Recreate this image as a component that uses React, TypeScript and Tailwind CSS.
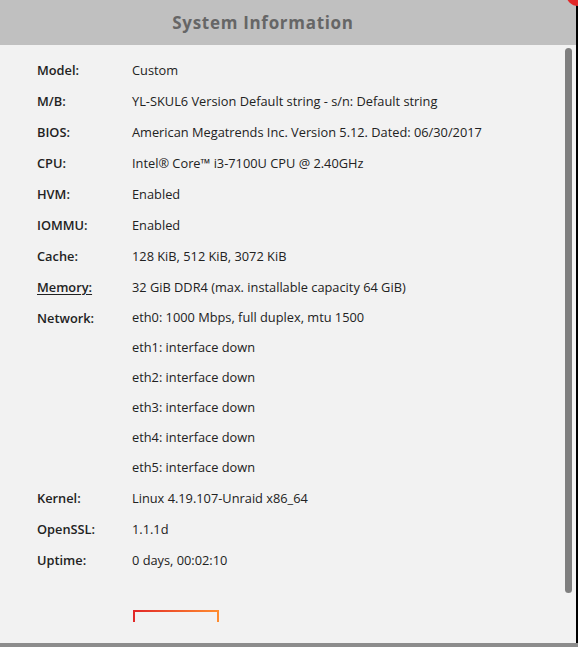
const rows: { label: string; lines: string[]; link?: boolean }[] = [
  { label: "Model:", lines: ["Custom"] },
  { label: "M/B:", lines: ["YL-SKUL6 Version Default string - s/n: Default string"] },
  { label: "BIOS:", lines: ["American Megatrends Inc. Version 5.12. Dated: 06/30/2017"] },
  { label: "CPU:", lines: ["Intel® Core™ i3-7100U CPU @ 2.40GHz"] },
  { label: "HVM:", lines: ["Enabled"] },
  { label: "IOMMU:", lines: ["Enabled"] },
  { label: "Cache:", lines: ["128 KiB, 512 KiB, 3072 KiB"] },
  { label: "Memory:", lines: ["32 GiB DDR4 (max. installable capacity 64 GiB)"], link: true },
  {
    label: "Network:",
    lines: [
      "eth0: 1000 Mbps, full duplex, mtu 1500",
      "eth1: interface down",
      "eth2: interface down",
      "eth3: interface down",
      "eth4: interface down",
      "eth5: interface down",
    ],
  },
  { label: "Kernel:", lines: ["Linux 4.19.107-Unraid x86_64"] },
  { label: "OpenSSL:", lines: ["1.1.1d"] },
  { label: "Uptime:", lines: ["0 days, 00:02:10"] },
];

export default function App() {
  return (
    <div
      className="h-[647px] w-[578px] bg-[#8c8c8c] overflow-hidden"
      style={{ fontFamily: '"Open Sans", "DejaVu Sans", sans-serif' }}
    >
      <div className="relative flex h-[643px] w-[578px] flex-col border-r-2 border-black bg-[#f2f2f2]">
        {/* title bar */}
        <div className="flex h-[45px] shrink-0 items-center justify-center bg-[#c0c0c0] pr-[50px]">
          <h1 className="text-[17px] font-bold tracking-[0.7px] text-[#666]">System Information</h1>
        </div>
        <span className="absolute right-[-14px] top-[-18px] h-[24px] w-[24px] rounded-full bg-[#e22828]" />

        <div className="relative h-[577px] shrink-0 overflow-hidden pt-[10px] pl-[37px] text-[12.8px] text-[#222]">
          {rows.map((r) => (
            <div key={r.label} className="flex">
              <div
                className={
                  "flex h-[31px] w-[95px] shrink-0 items-center font-semibold " +
                  (r.link ? "underline underline-offset-2" : "")
                }
              >
                {r.label}
              </div>
              <div className="flex flex-col">
                {r.lines.map((l, i) => (
                  <div
                    key={l}
                    className={"flex items-center " + (i === 0 && r.lines.length === 1 ? "h-[31px]" : "h-[30px]")}
                  >
                    {l}
                  </div>
                ))}
              </div>
            </div>
          ))}

          <button className="mt-[34px] ml-[96px] h-[36px] w-[86px] rounded-[3px] border-2 border-[#f05a3c] bg-transparent text-[13px] font-bold uppercase tracking-[2px] text-[#ffb07a] [border-image:linear-gradient(90deg,#e22828,#ff8c2f)_1]">
            Close
          </button>

          {/* scrollbar thumb */}
          <span className="absolute right-[4px] top-[3px] h-[545px] w-[7px] rounded-full bg-[#7f7f7f]" />
        </div>
      </div>
    </div>
  );
}
